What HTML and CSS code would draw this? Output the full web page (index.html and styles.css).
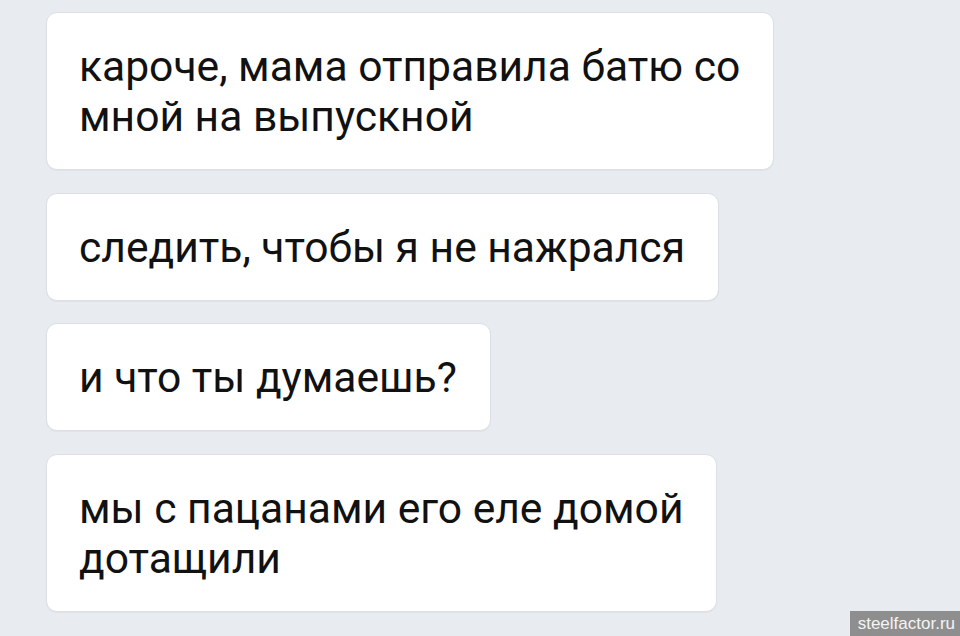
FILE: index.html
```html
<!DOCTYPE html>
<html lang="ru">
<head>
<meta charset="utf-8">
<link rel="stylesheet" href="styles.css">
</head>
<body>
<div class="chat">
  <div class="bubble">кароче, мама отправила батю со<br>мной на выпускной</div>
  <div class="bubble">следить, чтобы я не нажрался</div>
  <div class="bubble">и что ты думаешь?</div>
  <div class="bubble">мы с пацанами его еле домой<br>дотащили</div>
</div>
<div class="watermark">steelfactor.ru</div>
</body>
</html>
```
FILE: styles.css
```css
html, body {
  margin: 0;
  padding: 0;
}
body {
  width: 960px;
  height: 636px;
  background: #e8ebf0;
  font-family: Roboto, "Noto Sans", sans-serif;
  overflow: hidden;
  position: relative;
}
.chat {
  display: flex;
  flex-direction: column;
  align-items: flex-start;
  gap: 22.6px;
  padding: 12px 0 0 46px;
}
.bubble {
  background: #fff;
  border: 1px solid #dcdfe5;
  border-radius: 11px;
  padding: 28px 33px 28px 32px;
  font-size: 42.6px;
  line-height: 50px;
  color: #111;
  white-space: nowrap;
  box-shadow: 0 1px 1px rgba(0,0,0,0.04);
}
.watermark {
  position: absolute;
  right: 0;
  bottom: 0;
  background: #8e8e8e;
  color: #f4f4f4;
  font-family: "Liberation Sans", Arial, sans-serif;
  font-size: 17px;
  line-height: 25px;
  padding: 0 5px 0 8px;
}
```
